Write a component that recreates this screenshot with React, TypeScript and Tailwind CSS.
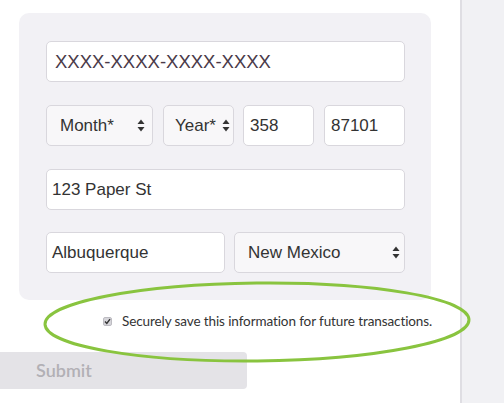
import React from "react";

function Arrows() {
    return (
        <svg width="8" height="13" viewBox="0 0 8 13" className="shrink-0">
            <path d="M4 0.5 L7.5 5 L0.5 5 Z" fill="#333" />
            <path d="M4 12.5 L7.5 8 L0.5 8 Z" fill="#333" />
        </svg>
    );
}

function Field({ value, w, pl = "pl-[6px]", color = "text-[#333]", size = "text-[17px]" }: { value: string; w: string; pl?: string; color?: string; size?: string }) {
    return (
        <div className={`${w} h-[41px] shrink-0 flex items-center ${pl} bg-white border border-[#d9d7dd] rounded-[5px] ${color} ${size}`}>
            {value}
        </div>
    );
}

function Select({ label, w, pl, pr }: { label: string; w: string; pl: string; pr: string }) {
    return (
        <div className={`${w} h-[41px] shrink-0 flex items-center justify-between ${pl} ${pr} bg-[#f8f7f9] border border-[#d9d7dd] rounded-[5px] text-[#333] text-[17px]`}>
            <span>{label}</span>
            <Arrows />
        </div>
    );
}

export default function App() {
    return (
        <div className="relative w-[504px] h-[403px] flex bg-white overflow-hidden" style={{ fontFamily: "'Liberation Sans', Arial, sans-serif" }}>
            <div className="w-[460px] shrink-0 flex flex-col">
                <div className="ml-[19px] mt-[13px] w-[412px] h-[287px] bg-[#f2f1f5] rounded-[10px] pl-[27px] pr-[26px] pt-[28px] flex flex-col gap-[23px]">
                    <Field value="XXXX-XXXX-XXXX-XXXX" w="w-full" pl="pl-[8px]" color="text-[#4a3a49]" size="text-[18.5px]" />
                    <div className="flex">
                        <Select label="Month*" w="w-[107px]" pl="pl-[13px]" pr="pr-[7px]" />
                        <div className="w-[10px]" />
                        <Select label="Year*" w="w-[71px]" pl="pl-[11px]" pr="pr-[3px]" />
                        <div className="w-[9px]" />
                        <Field value="358" w="w-[71px]" />
                        <div className="w-[10px]" />
                        <Field value="87101" w="w-[81px]" />
                    </div>
                    <Field value="123 Paper St" w="w-full" pl="pl-[5px]" />
                    <div className="flex gap-[9px] -mt-px">
                        <Field value="Albuquerque" w="w-[179px]" pl="pl-[5px]" />
                        <Select label="New Mexico" w="w-[171px]" pl="pl-[13px]" pr="pr-[4px]" />
                    </div>
                </div>
                <div className="flex items-center mt-[11px] pl-[103px] gap-[10px]">
                    <span className="w-[9px] h-[9px] rounded-[2px] bg-[#d6d5da] border border-[#bdbcc2] flex items-center justify-center">
                        <svg width="7" height="7" viewBox="0 0 7 7">
                            <path d="M1 3.6 L2.8 5.4 L6 1.2" stroke="#333" strokeWidth="1.4" fill="none" />
                        </svg>
                    </span>
                    <span className="text-[13.5px] text-[#333] tracking-[-0.1px]" style={{ fontFamily: "Lato, 'Open Sans', sans-serif" }}>
                        Securely save this information for future transactions.
                    </span>
                </div>
                <div className="mt-[21px] w-[247px] h-[37px] bg-[#e4e3e7] rounded-r-[4px] flex items-center pl-[36px] text-[18px] font-semibold text-[#b2b0b5]" style={{ fontFamily: "Lato, 'Open Sans', sans-serif" }}>
                    Submit
                </div>
            </div>
            <div className="w-[2px] bg-[#dfdee3]" />
            <div className="flex-1 bg-[#f1f1f4]" />
            <svg className="absolute inset-0 pointer-events-none" width="504" height="403" viewBox="0 0 504 403">
                <ellipse cx="257" cy="322" rx="212" ry="39" fill="none" stroke="#89c43f" strokeWidth="3" transform="rotate(-0.6 257 322)" />
            </svg>
        </div>
    );
}
